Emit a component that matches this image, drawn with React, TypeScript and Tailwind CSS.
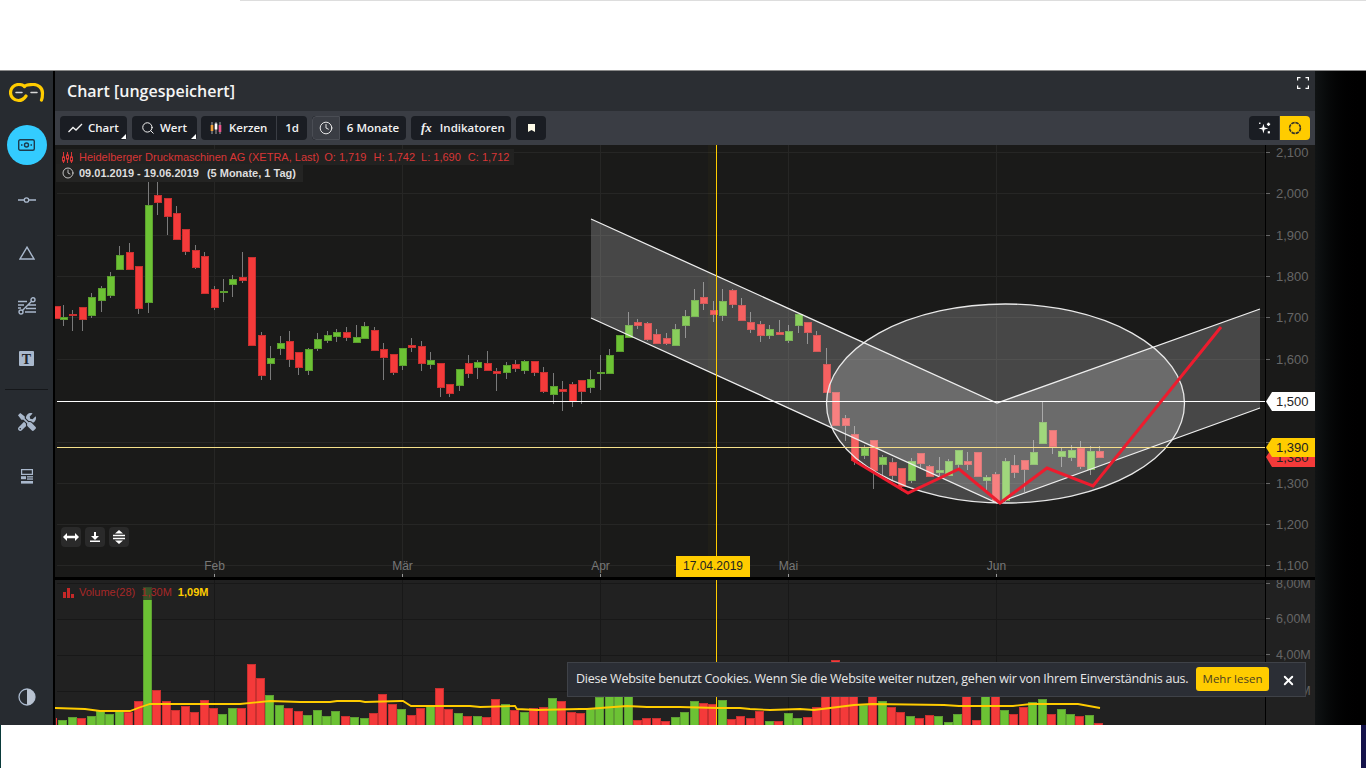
import React from 'react';
import { Search, Clock, X } from 'lucide-react';
import { FaTools } from 'react-icons/fa';

type Candle = [number, number, number, number, number, 'r' | 'g'];

// positions read off the zoomed crops: [x, wickTop, bodyTop, bodyBottom, wickBottom]
const groupA: Candle[] = [
  [2, 378, 378, 414, 414, 'r'], [25, 375, 411, 417, 438, 'g'], [52, 390, 402, 405, 453, 'r'], [82, 381, 381, 417, 453, 'r'],
  [109, 339, 351, 405, 414, 'g'], [139, 318, 324, 360, 396, 'g'], [166, 276, 288, 345, 354, 'g'], [193, 198, 225, 267, 267, 'g'],
  [223, 189, 216, 267, 267, 'r'], [250, 258, 258, 384, 402, 'r'], [280, -30, 75, 366, 399, 'g'], [307, -15, 45, 66, 105, 'r'],
  [337, 54, 54, 108, 165, 'r'], [364, 78, 99, 177, 180, 'r'], [391, 147, 147, 213, 225, 'r'], [421, 195, 210, 261, 267, 'r'],
  [448, 216, 228, 339, 342, 'r'], [478, 318, 327, 381, 390, 'r'], [505, 297, 333, 336, 366, 'g'], [532, 285, 297, 312, 351, 'g'],
  [562, 216, 291, 300, 309, 'r'], [589, 231, 231, 495, 495, 'r'], [619, 456, 465, 585, 600, 'r'], [646, 498, 534, 549, 600, 'g'],
  [676, 468, 489, 504, 525, 'g'], [703, 453, 483, 537, 561, 'r'], [730, 516, 516, 561, 585, 'r'], [760, 504, 507, 570, 585, 'g'],
  [787, 459, 477, 504, 513, 'g'], [817, 453, 465, 480, 489, 'g'], [844, 447, 456, 468, 486, 'g'], [874, 441, 456, 471, 483, 'r'],
];
const groupB: Candle[] = [
  [2, 135, 171, 186, 186, 'g'], [28, 126, 138, 174, 177, 'g'], [58, 141, 150, 210, 210, 'r'], [85, 189, 207, 231, 300, 'r'],
  [115, 222, 222, 276, 285, 'r'], [142, 204, 204, 255, 270, 'g'], [169, 174, 195, 201, 216, 'r'], [199, 183, 198, 249, 273, 'r'],
  [226, 216, 240, 252, 267, 'g'], [256, 249, 249, 321, 351, 'r'], [283, 312, 312, 339, 351, 'r'], [313, 267, 267, 315, 333, 'g'],
  [340, 225, 249, 279, 294, 'r'], [367, 240, 246, 261, 297, 'g'], [397, 213, 249, 270, 270, 'r'], [424, 264, 273, 279, 333, 'r'],
  [454, 246, 255, 276, 297, 'g'], [481, 240, 252, 264, 276, 'r'], [508, 240, 243, 270, 282, 'g'], [538, 243, 243, 276, 288, 'r'],
  [565, 261, 276, 333, 339, 'r'], [595, 279, 318, 342, 372, 'g'], [622, 303, 327, 333, 393, 'r'], [652, 306, 312, 363, 381, 'r'],
  [679, 300, 300, 333, 372, 'r'], [706, 270, 297, 321, 339, 'g'], [736, 225, 276, 279, 330, 'g'], [763, 207, 225, 279, 279, 'g'],
  [793, 165, 165, 213, 213, 'g'],
];
const groupC: Candle[] = [
  [25, 126, 165, 201, 201, 'g'], [52, 147, 156, 165, 177, 'r'], [82, 156, 159, 207, 213, 'r'], [109, 177, 192, 219, 219, 'r'],
  [139, 189, 204, 219, 225, 'r'], [166, 162, 177, 225, 225, 'g'], [196, 120, 138, 165, 204, 'g'], [223, 57, 90, 138, 138, 'g'],
  [250, 36, 81, 99, 120, 'r'], [280, 93, 120, 132, 156, 'r'], [307, 57, 93, 135, 153, 'g'], [337, 57, 60, 102, 114, 'r'],
  [364, 84, 105, 150, 153, 'r'], [391, 126, 156, 177, 189, 'r'], [421, 153, 162, 195, 216, 'r'], [448, 165, 177, 195, 207, 'g'],
  [478, 150, 186, 192, 195, 'r'], [505, 165, 183, 210, 219, 'g'], [535, 132, 132, 165, 189, 'g'], [562, 156, 156, 186, 222, 'r'],
  [589, 183, 195, 243, 243, 'r'], [619, 234, 282, 366, 366, 'r'],
];
const groupD: Candle[] = [
  [46, 36, 36, 135, 135, 'r'], [76, 105, 114, 135, 183, 'r'], [103, 138, 162, 240, 255, 'r'], [133, 195, 204, 225, 237, 'g'],
  [160, 180, 180, 270, 327, 'r'], [187, 225, 231, 252, 285, 'g'], [217, 234, 246, 285, 300, 'r'], [244, 264, 264, 318, 333, 'r'],
  [274, 234, 243, 300, 309, 'g'], [301, 219, 219, 249, 267, 'r'], [328, 255, 258, 288, 288, 'r'], [358, 231, 270, 276, 288, 'g'],
  [385, 237, 243, 285, 285, 'g'], [415, 210, 210, 252, 264, 'g'], [442, 216, 243, 252, 270, 'r'], [472, 216, 216, 288, 288, 'r'],
  [499, 285, 291, 300, 330, 'g'], [526, 276, 282, 360, 366, 'r'], [556, 234, 243, 360, 366, 'g'], [583, 225, 255, 276, 294, 'r'],
  [613, 240, 240, 267, 336, 'r'], [640, 180, 216, 252, 252, 'g'], [667, 66, 126, 189, 189, 'g'], [697, 150, 150, 198, 222, 'r'],
  [724, 204, 213, 228, 261, 'g'], [754, 195, 210, 231, 243, 'g'], [781, 183, 204, 258, 267, 'r'], [811, 198, 213, 267, 285, 'g'],
  [838, 198, 213, 231, 234, 'r'],
];

const place = (list: Candle[], ox: number, oy: number): Candle[] =>
  list.map(([x, a, b, c, d, col]) => [ox + x / 3, oy + a / 3, oy + b / 3, oy + c / 3, oy + d / 3, col]);

const candles: Candle[] = [
  ...place(groupA, 55, 180),
  ...place(groupB, 355, 280),
  ...place(groupC, 620, 270),
  ...place(groupD, 820, 380),
];

type Bar = [number, number, 'r' | 'g'];

const barsA: [number, number, 'r' | 'g'][] = [
  [62, 5, 'g'], [72, 8, 'g'], [81, 7, 'r'], [91, 9, 'g'], [100, 14, 'g'], [109, 11, 'g'], [119, 14, 'g'], [128, 13, 'r'],
  [138, 24, 'r'], [147, 138, 'g'], [156, 35, 'r'], [166, 24, 'r'], [175, 15, 'r'], [185, 19, 'r'], [194, 13, 'r'], [204, 25, 'r'],
  [213, 17, 'r'], [222, 11, 'g'], [232, 17, 'g'], [241, 17, 'r'], [251, 61, 'r'], [260, 47, 'r'], [269, 30, 'g'], [279, 20, 'g'],
  [288, 17, 'r'], [298, 14, 'r'],
];
const barsB: [number, number, 'r' | 'g'][] = [
  [22, 10, 'g'], [50, 15, 'g'], [78, 9, 'g'], [106, 14, 'g'], [135, 9, 'r'], [163, 8, 'g'], [191, 7, 'g'], [219, 12, 'r'],
  [247, 31, 'r'], [275, 21, 'r'], [304, 16, 'g'], [333, 10, 'r'], [361, 17, 'r'], [390, 19, 'g'], [417, 37, 'r'], [445, 16, 'r'],
  [474, 12, 'g'], [502, 9, 'r'], [531, 9, 'g'], [558, 8, 'r'], [586, 26, 'r'], [615, 21, 'g'], [643, 15, 'r'], [672, 13, 'g'],
  [700, 17, 'r'], [729, 18, 'r'], [756, 27, 'g'], [784, 24, 'r'], [813, 13, 'r'], [841, 12, 'r'], [870, 16, 'g'], [898, 28, 'g'],
  [927, 32, 'g'], [954, 32, 'g'], [983, 32, 'g'], [1011, 5, 'r'], [1039, 7, 'r'], [1067, 7, 'r'], [1095, 4, 'r'], [1124, 8, 'g'],
  [1152, 13, 'g'], [1181, 24, 'g'], [1209, 22, 'r'], [1237, 21, 'r'], [1266, 25, 'g'], [1293, 6, 'r'], [1321, 9, 'r'], [1350, 7, 'r'],
  [1378, 14, 'r'], [1407, 4, 'g'], [1435, 4, 'r'], [1463, 12, 'g'], [1491, 7, 'g'],
];
const barsC: [number, number, 'r' | 'g'][] = [
  [19, 8, 'r'], [45, 18, 'r'], [70, 35, 'r'], [96, 65, 'r'], [122, 35, 'r'], [148, 35, 'r'], [174, 20, 'g'], [200, 35, 'r'],
  [226, 24, 'g'], [252, 18, 'r'], [278, 13, 'r'], [304, 9, 'g'], [330, 7, 'r'], [356, 10, 'r'], [382, 9, 'g'], [409, 3, 'g'],
  [435, 11, 'g'], [461, 30, 'r'], [487, 5, 'r'], [513, 30, 'g'], [539, 30, 'r'], [565, 15, 'g'], [591, 11, 'r'], [617, 18, 'r'],
  [643, 23, 'g'], [669, 26, 'g'], [695, 11, 'r'], [722, 16, 'g'], [748, 11, 'g'], [774, 9, 'r'], [800, 10, 'g'], [826, 2, 'r'],
];

const bars: Bar[] = [
  ...barsA,
  ...barsB.map(([x, h, c]): Bar => [300 + x / 3, h, c]),
  ...barsC.map(([x, h, c]): Bar => [800 + x / 2.77, h, c]),
];

const maLine =
  '55,708 85,709 100,711 130,711 138,708 150,704 240,704 270,701 300,702 330,702 337,701 360,701 365,702 400,701 403,701 411,706 470,706 480,707 515,706 517,709 537,710 580,709 587,709 627,706 647,707 680,707 717,708 740,708 750,709 770,710 800,709 814,710 854,705 872,704 944,705 959,706 1013,706 1031,704 1078,704 1100,708';

const prices: [string, number][] = [
  ['2,100', 152], ['2,000', 193], ['1,900', 235], ['1,800', 276], ['1,700', 317], ['1,600', 359],
  ['1,400', 442], ['1,300', 483], ['1,200', 524], ['1,100', 565],
];
const months: [string, number][] = [['Feb', 214], ['Mär', 402], ['Apr', 600], ['Mai', 788], ['Jun', 996]];
const gridX = months.map((m) => m[1]);

function PriceChart() {
  return (
    <svg viewBox="55 145 1260 432" className="block h-[432px] w-[1260px]">
      <rect x="55" y="145" width="1260" height="432" fill="#1a1a19" />
      {prices.map(([label, y]) => (
        <line key={label} x1="57" x2="1265" y1={y + 0.5} y2={y + 0.5} stroke="#262625" />
      ))}
      <line x1="57" x2="1265" y1="401.5" y2="401.5" stroke="#262625" />
      {gridX.map((x) => (
        <line key={x} x1={x + 0.5} x2={x + 0.5} y1="145" y2="577" stroke="#262625" />
      ))}
      <rect x="708" y="145" width="9" height="432" fill="#ffcc00" opacity="0.025" />
      {candles.map(([x, wt, bt, bb, wb, col], i) => {
        const cx = Math.round(x);
        return (
          <g key={i} shapeRendering="crispEdges">
            <line x1={cx + 0.5} x2={cx + 0.5} y1={wt} y2={wb} stroke="#7a7a7a" />
            <rect
              x={cx - 3}
              y={Math.round(bt) + 0.5}
              width="7"
              height={Math.max(1, Math.round(bb - bt))}
              fill={col === 'r' ? '#f43a3a' : '#6cc234'}
              stroke={col === 'r' ? '#c93030' : '#5b9f2e'}
            />
          </g>
        );
      })}
      <polygon points="591,219 997,403 1260,309 1260,408 997,503 591,318" fill="#ffffff" fillOpacity="0.2" />
      <ellipse cx="1005.5" cy="403.5" rx="179" ry="99.5" fill="#ffffff" fillOpacity="0.2" stroke="#e8e8e8" strokeWidth="1.3" />
      <polyline points="591,219 997,403 1260,309" fill="none" stroke="#eeeeee" strokeWidth="1.3" />
      <polyline points="591,318 997,503 1260,408" fill="none" stroke="#eeeeee" strokeWidth="1.3" />
      <line x1="57" x2="1265" y1="401.5" y2="401.5" stroke="#ffffff" />
      <line x1="57" x2="1265" y1="447.5" y2="447.5" stroke="#f6e08a" />
      <polyline
        points="853,460 908,493 959,469 1000,503 1047,468 1093,486 1221,327"
        fill="none"
        stroke="#ed1c2e"
        strokeWidth="3"
      />
      <line x1="716.5" x2="716.5" y1="145" y2="577" stroke="#ffcc00" />
      <line x1="1265.5" x2="1265.5" y1="145" y2="577" stroke="#000000" />
      {prices.map(([label, y]) => (
        <g key={label}>
          <line x1="1266" x2="1270" y1={y + 0.5} y2={y + 0.5} stroke="#666666" />
          <text x="1276" y={y + 4.5} className="fill-[#666666] font-['Liberation_Sans'] text-[13px]">
            {label}
          </text>
        </g>
      ))}
      {months.map(([label, x]) => (
        <g key={label}>
          <line x1={x + 0.5} x2={x + 0.5} y1="574" y2="577" stroke="#999999" />
          <text x={x + 0.5} y="570" textAnchor="middle" className="fill-[#777777] font-['Liberation_Sans'] text-[12px]">
            {label}
          </text>
        </g>
      ))}
      <polygon points="1266,457 1272,448 1315,448 1315,467 1272,467" fill="#f43a3a" />
      <text x="1276" y="461.5" className="fill-[#222222] font-['Liberation_Sans'] text-[13px]">1,380</text>
      <polygon points="1266,401.5 1272,392 1315,392 1315,411 1272,411" fill="#ffffff" />
      <text x="1276" y="406" className="fill-[#222222] font-['Liberation_Sans'] text-[13px]">1,500</text>
      <polygon points="1266,447.5 1272,438 1315,438 1315,457 1272,457" fill="#ffcc00" />
      <text x="1276" y="452" className="fill-[#222222] font-['Liberation_Sans'] text-[13px]">1,390</text>
      <rect x="676" y="556" width="74" height="21" fill="#ffcc00" />
      <text x="713" y="570" textAnchor="middle" className="fill-[#222222] font-['Liberation_Sans'] text-[12px]">
        17.04.2019
      </text>
    </svg>
  );
}

function VolumeChart() {
  return (
    <svg viewBox="55 580 1260 145" className="block h-[145px] w-[1260px]">
      <rect x="55" y="580" width="1260" height="145" fill="#212121" />
      {[583, 619, 655, 691].map((y) => (
        <line key={y} x1="57" x2="1265" y1={y + 0.5} y2={y + 0.5} stroke="#181818" />
      ))}
      {gridX.map((x) => (
        <line key={x} x1={x + 0.5} x2={x + 0.5} y1="580" y2="725" stroke="#181818" />
      ))}
      <rect x="56" y="718" width="1" height="7" fill="#f43a3a" />
      {bars.map(([x, h, col], i) => {
        const cx = Math.round(x);
        return (
          <rect
            key={i}
            x={cx - 3.5}
            y={725.5 - h}
            width="8"
            height={h + 1}
            shapeRendering="crispEdges"
            fill={col === 'r' ? '#f43a3a' : '#6cc234'}
            stroke={col === 'r' ? '#c93030' : '#5f9f33'}
          />
        );
      })}
      <polyline points={maLine} fill="none" stroke="#ffcc00" strokeWidth="1.8" />
      <line x1="716.5" x2="716.5" y1="580" y2="725" stroke="#ffcc00" />
      <line x1="1265.5" x2="1265.5" y1="580" y2="725" stroke="#000000" />
      {[['8,00M', 583], ['6,00M', 618], ['4,00M', 654], ['2,00M', 690]].map(([label, y]) => (
        <g key={label as string}>
          <line x1="1266" x2="1270" y1={(y as number) + 0.5} y2={(y as number) + 0.5} stroke="#666666" />
          <text x="1276" y={(y as number) + 4.5} className="fill-[#666666] font-['Liberation_Sans'] text-[12.5px]">
            {label}
          </text>
        </g>
      ))}
    </svg>
  );
}

function Logo() {
  return (
    <svg width="36" height="20" viewBox="0 0 36 20" fill="none" strokeLinecap="round">
      <path d="M15 3C13.5 1.8 11.5 1.5 9.5 1.5A8 8 0 0 0 9.5 17.5C13 17.5 15 16 17 13" stroke="#ffcc00" strokeWidth="3.2" />
      <path d="M15.5 3.5C17 2 20 1.5 24 1.5A9 8.5 0 0 1 33.5 10C33.5 12 33.5 15 32.5 17" stroke="#ffcc00" strokeWidth="3.2" />
      <path d="M7 9.5H13M22 9.5H28" stroke="#d8d8d8" strokeWidth="1.5" />
    </svg>
  );
}

const ic = 'text-[#a9b8cc]';

function SideIcon({ children, className }: { children: React.ReactNode; className: string }) {
  return <div className={`flex w-full shrink-0 items-center justify-center ${className}`}>{children}</div>;
}

function Sidebar() {
  return (
    <div className="flex w-[55px] shrink-0 flex-col border-r-2 border-black bg-[#272b30]">
      <div className="flex h-[47px] shrink-0 justify-center pt-[12px]">
        <Logo />
      </div>
      <SideIcon className="h-[54px]">
        <div className="flex h-10 w-10 items-center justify-center rounded-full bg-[#33ccff]">
          <svg width="17" height="12" viewBox="0 0 17 12" fill="none" stroke="#1d3b4d" strokeWidth="1.4">
            <rect x="0.7" y="0.7" width="15.6" height="10.6" rx="1.5" />
            <circle cx="8.5" cy="6" r="2" />
            <path d="M3 6H4.5M12.5 6H14" />
          </svg>
        </div>
      </SideIcon>
      <SideIcon className={`h-[56px] ${ic}`}>
        <svg width="18" height="8" viewBox="0 0 18 8" fill="none" stroke="currentColor" strokeWidth="1.3">
          <path d="M0 4H6.2M11 4H18" />
          <circle cx="8.5" cy="4" r="2.2" />
        </svg>
      </SideIcon>
      <SideIcon className={`h-[50px] ${ic}`}>
        <svg width="16" height="14" viewBox="0 0 16 14" fill="none" stroke="currentColor" strokeWidth="1.4">
          <path d="M8 1.2L15 13H1Z" />
        </svg>
      </SideIcon>
      <SideIcon className={`h-[56px] ${ic}`}>
        <svg width="18" height="18" viewBox="0 0 18 18" fill="none" stroke="currentColor" strokeWidth="1.4">
          <circle cx="15" cy="2.8" r="2" />
          <circle cx="3" cy="15" r="2" />
          <path d="M13.6 4.2L4.4 13.6M0 4.5H9M0 8H6M0 11H3M10 8H18M8 11.5H18M7 15H18" />
        </svg>
      </SideIcon>
      <SideIcon className="h-[48px]">
        <svg width="15" height="15" viewBox="0 0 15 15">
          <rect width="15" height="15" rx="1" fill="#a9b8cc" />
          <text x="7.5" y="12.5" textAnchor="middle" className="fill-[#20242a] font-['Liberation_Serif'] text-[14px] font-bold">
            T
          </text>
        </svg>
      </SideIcon>
      <div className="mx-[5px] mt-[7px] h-px shrink-0 bg-[#15171a]" />
      <SideIcon className={`h-[64px] ${ic}`}>
        <FaTools size={18} />
      </SideIcon>
      <SideIcon className={`h-[44px] ${ic}`}>
        <svg width="12" height="15" viewBox="0 0 12 15" fill="currentColor">
          <path d="M0 0H12V6H0ZM1.2 1.2V4.8H10.8V1.2Z" fillRule="evenodd" />
          <rect y="7.2" width="5" height="3" />
          <rect x="6" y="7.2" width="6" height="1.3" />
          <rect x="6" y="9.4" width="6" height="1.3" />
          <rect y="12" width="12" height="2.6" />
        </svg>
      </SideIcon>
      <div className="flex-1" />
      <SideIcon className="h-[56px]">
        <svg width="18" height="18" viewBox="0 0 18 18">
          <circle cx="9" cy="9" r="8" fill="#272b30" stroke="#a9b8cc" strokeWidth="1.3" />
          <path d="M9 1A8 8 0 0 1 9 17Z" fill="#b9c3d0" />
        </svg>
      </SideIcon>
    </div>
  );
}

function Corner() {
  return (
    <svg width="5" height="5" viewBox="0 0 5 5" className="absolute bottom-px right-px">
      <path d="M5 0V5H0Z" fill="#ffffff" />
    </svg>
  );
}

const btn =
  "relative flex h-6 items-center rounded-sm bg-[#1a1d23] font-['Open_Sans'] text-[11.5px] font-semibold text-[#f2f2f2]";

function Toolbar() {
  return (
    <div className="flex h-[34px] items-center bg-[#3a3d44] pl-[5px] pr-[5px]">
      <div className={`${btn} w-[67px] pl-[8px]`}>
        <svg width="15" height="10" viewBox="0 0 15 10" fill="none" stroke="#f2f2f2" strokeWidth="1.3" className="mr-[5px]">
          <path d="M0.5 9L5 4.5L8 7L14 1" />
        </svg>
        Chart
        <Corner />
      </div>
      <div className={`${btn} ml-[5px] w-[65px] pl-[9px]`}>
        <Search size={14} strokeWidth={1.7} className="mr-[5px]" />
        Wert
        <Corner />
      </div>
      <div className={`${btn} ml-[4px] w-[106px]`}>
        <div className="flex h-full w-[76px] items-center border-r border-[#3a3d44] pl-[9px]">
          <svg width="12" height="12" viewBox="0 0 12 12" className="mr-[7px]">
            <path d="M2 0V12M6 0V12M10 0V12" stroke="#cccccc" strokeWidth="0.8" />
            <rect x="0.7" y="3" width="2.6" height="6" fill="#f2a13a" />
            <rect x="4.7" y="1.5" width="2.6" height="6" fill="#ffffff" />
            <rect x="8.7" y="3" width="2.6" height="7" fill="#e8528a" />
          </svg>
          Kerzen
        </div>
        <div className="flex-1 text-center">1d</div>
      </div>
      <div className={`${btn} ml-[5px] w-[94px] overflow-hidden`}>
        <div className="flex h-full w-[28px] items-center justify-center rounded-l-sm border border-[#4a4d54] bg-[#3a3d44]">
          <Clock size={14} strokeWidth={1.6} />
        </div>
        <div className="flex-1 text-center">6 Monate</div>
      </div>
      <div className={`${btn} ml-[5px] w-[100px] pl-[10px]`}>
        <span className="mr-[8px] font-['Liberation_Serif'] text-[13px] font-bold italic">fx</span>
        Indikatoren
      </div>
      <div className={`${btn} ml-[5px] w-[30px] justify-center`}>
        <svg width="7" height="8" viewBox="0 0 7 8">
          <path d="M0 0H7V8L3.5 6L0 8Z" fill="#fdfbe8" />
        </svg>
      </div>
      <div className="flex-1" />
      <div className="flex h-6 w-[61px] overflow-hidden rounded-sm">
        <div className="flex w-[30px] items-center justify-center bg-[#1a1d23]">
          <svg width="13" height="13" viewBox="0 0 12 12" fill="#ffffff">
            <path d="M5 1.5L6 5L9.5 6L6 7L5 10.5L4 7L0.5 6L4 5Z" />
            <rect x="9" y="0.6" width="1.4" height="3" />
            <rect x="8.2" y="1.4" width="3" height="1.4" />
            <rect x="9" y="8.5" width="2" height="2" />
            <rect x="1" y="0.5" width="1.3" height="1.3" />
          </svg>
        </div>
        <div className="ml-px flex w-[30px] items-center justify-center bg-[#ffcc00]">
          <svg width="14" height="14" viewBox="0 0 14 14" fill="none">
            <circle cx="7" cy="7" r="5.4" stroke="#33322a" strokeWidth="1.6" strokeDasharray="3.4 0.8" />
          </svg>
        </div>
      </div>
    </div>
  );
}

function ZoomButton({ children }: { children: React.ReactNode }) {
  return <div className="flex h-5 w-5 items-center justify-center rounded-sm bg-[#2a2a2a]">{children}</div>;
}

export default function App() {
  return (
    <div className="flex h-[768px] w-[1366px] flex-col overflow-hidden bg-white">
      <div className="h-[71px] shrink-0 border-b border-[#8a8a8a]">
        <div className="ml-[240px] h-px bg-[#dddddd]" />
      </div>
      <div className="flex h-[654px] shrink-0 bg-black">
        <Sidebar />
        <div className="relative w-[1260px] shrink-0">
          <div className="flex h-10 items-center justify-between bg-[#2b2e33] pl-[12px] pr-[6px]">
            <span className="font-['Open_Sans'] text-[16px] font-semibold text-[#f5f5f5]">Chart [ungespeichert]</span>
            <svg width="12" height="12" viewBox="0 0 12 12" fill="none" stroke="#ffffff" strokeWidth="1.2" className="mt-[6px] self-start">
              <path d="M0.6 3.5V0.6H3.5M8.5 0.6H11.4V3.5M11.4 8.5V11.4H8.5M3.5 11.4H0.6V8.5" />
            </svg>
          </div>
          <Toolbar />
          <div className="relative h-[432px]">
            <PriceChart />
            <div className="absolute left-[1px] top-[4px] flex h-[16px] items-center bg-[#222221] pl-[6px] pr-[5px] font-['Liberation_Sans'] text-[11px] text-[#d93636]">
              <svg width="11" height="11" viewBox="0 0 11 11" fill="none" stroke="#d93636" strokeWidth="1" className="mr-[6px]">
                <path d="M1.5 0V11M5.5 0V11M9.5 0V11" />
                <rect x="0.5" y="5" width="2" height="4" fill="#222221" />
                <rect x="4.5" y="3" width="2" height="4" fill="#222221" />
                <rect x="8.5" y="5" width="2" height="4" fill="#222221" />
              </svg>
              Heidelberger Druckmaschinen AG (XETRA, Last)
              <span className="ml-[5px]">O: 1,719</span>
              <span className="ml-[7px]">H: 1,742</span>
              <span className="ml-[6px]">L: 1,690</span>
              <span className="ml-[7px]">C: 1,712</span>
            </div>
            <div className="absolute left-[1px] top-[19px] flex h-[18px] items-center bg-[#242423] pl-[6px] pr-[7px] font-['Liberation_Sans'] text-[11px] font-bold text-[#dddddd]">
              <Clock size={12} strokeWidth={1.7} className="mr-[5px]" />
              09.01.2019 - 19.06.2019
              <span className="ml-[8px]">(5 Monate, 1 Tag)</span>
            </div>
            <div className="absolute left-[6px] top-[382px] flex gap-1">
              <ZoomButton>
                <svg width="16" height="8" viewBox="0 0 16 8" fill="#ffffff">
                  <path d="M0 4L4 0V2.8H12V0L16 4L12 8V5.2H4V8Z" />
                </svg>
              </ZoomButton>
              <ZoomButton>
                <svg width="10" height="10" viewBox="0 0 10 10" fill="#ffffff">
                  <path d="M4 0H6V4H9L5 8L1 4H4ZM0 8.6H10V10H0Z" />
                </svg>
              </ZoomButton>
              <ZoomButton>
                <svg width="12" height="14" viewBox="0 0 12 14" fill="#ffffff">
                  <path d="M6 0L10 3.5H2ZM0 4.7H12V6.2H0ZM0 7.8H12V9.3H0ZM2 10.5H10L6 14Z" />
                </svg>
              </ZoomButton>
            </div>
          </div>
          <div className="h-[3px] bg-black" />
          <div className="relative h-[145px]">
            <VolumeChart />
            <div className="absolute left-[1px] top-[5px] flex h-[15px] items-center bg-[#222222]/70 pl-[7px] pr-[4px] font-['Liberation_Sans'] text-[11px] text-[#a82828]">
              <svg width="11" height="10" viewBox="0 0 11 10" fill="#c62828" className="mr-[5px]">
                <rect y="4" width="3" height="6" />
                <rect x="4" width="3" height="10" />
                <rect x="8" y="6" width="3" height="4" />
              </svg>
              Volume(28)
              <span className="ml-[6px]">1,30M</span>
              <span className="ml-[6px] font-bold text-[#ffcc00]">1,09M</span>
            </div>
          </div>
          <div className="absolute left-[512px] top-[591px] flex h-[35px] w-[739px] items-center border border-[#3f4248] bg-[#2b2e35] pl-[8px] font-['Open_Sans'] text-[12.5px] tracking-[-0.23px] text-[#e8e8e8]">
            <span className="whitespace-nowrap">
              Diese Website benutzt Cookies. Wenn Sie die Website weiter nutzen, gehen wir von Ihrem Einverständnis aus.
            </span>
            <div className="absolute left-[628px] top-[4px] flex h-6 w-[73px] items-center justify-center rounded-[3px] bg-[#ffcc00] text-[11.5px] tracking-normal text-[#4a4020]">
              Mehr lesen
            </div>
            <X size={15} strokeWidth={3} className="absolute left-[713px] top-[10px] text-white" />
          </div>
        </div>
        <div className="w-[51px] shrink-0 bg-gradient-to-r from-[#101314] to-black" />
      </div>
      <div className="flex h-[43px] shrink-0">
        <div className="w-px bg-[#0a3a3a]" />
        <div className="flex-1 bg-white" />
        <div className="w-[5px] bg-[#14124a]" />
      </div>
    </div>
  );
}
